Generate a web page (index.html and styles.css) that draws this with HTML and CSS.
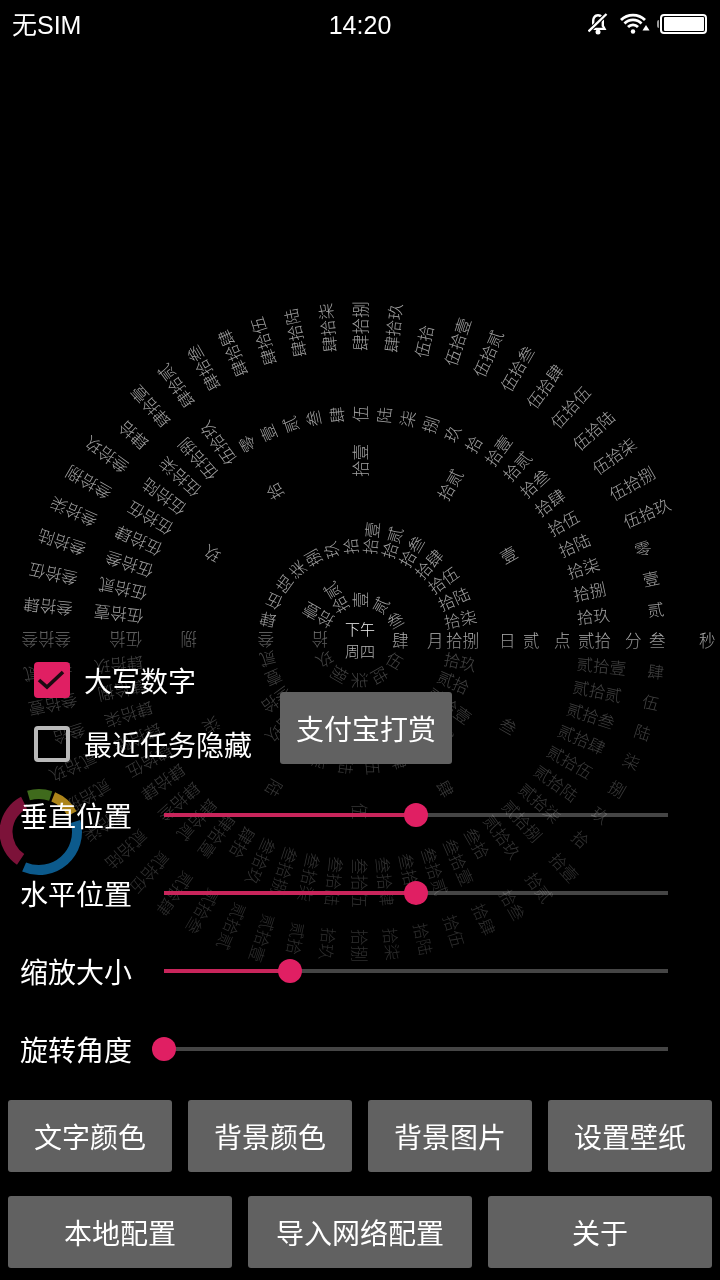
FILE: index.html
```html
<!DOCTYPE html>
<html lang="zh-CN">
<head>
<meta charset="utf-8">
<title>文字时钟</title>
<link rel="stylesheet" href="styles.css">
</head>
<body>
<div class="page">
  <div class="dial" id="dial"></div>
  <div class="dim"></div>
  <div class="center-text">
    <div class="center-top">下午</div>
    <div class="center-bottom">周四</div>
  </div>
  <svg class="logo" viewBox="0 0 90 100" fill="none" stroke-width="10">
    <path stroke="#7c1239" stroke-width="13" d="M20.6 79.4A33 33 0 0 1 24 22.6"/>
    <path stroke="#3f6a1c" d="M28.5 15.5A38 38 0 0 1 50.7 15.9"/>
    <path stroke="#ac841a" d="M53.2 16.8A38 38 0 0 1 72.2 33.6"/>
    <path stroke="#0c5a8c" d="M75.5 41.5A38 38 0 0 1 24.1 87"/>
  </svg>

  <header class="status">
    <span class="carrier">无SIM</span>
    <span class="clock">14:20</span>
    <div class="status-icons">
      <svg class="bell" viewBox="0 0 20 22" fill="none">
        <path fill="#fff" d="M10 1C6 1 4 4.5 4 8V12.5L1.5 17H18.5L16 12.5V8C16 4.5 14 1 10 1Z"/>
        <path fill="#000" d="M10 3.5C7.5 3.5 6.4 5.8 6.4 8V13.2L5.2 14.8H14.8L13.6 13.2V8C13.6 5.8 12.5 3.5 10 3.5Z"/>
        <circle cx="10" cy="19" r="2.5" fill="#fff"/>
        <path stroke="#000" stroke-width="4.4" d="M0.5 18.5L18.5 1"/>
        <path stroke="#fff" stroke-width="2.4" d="M0.5 18.5L18.5 1"/>
      </svg>
      <svg class="wifi" viewBox="0 0 32 21" fill="none" stroke="#fff" stroke-width="2.8">
        <path d="M2 7A17 17 0 0 1 26 7"/>
        <path d="M5.5 10.5A12 12 0 0 1 22.5 10.5"/>
        <path d="M9 14A7 7 0 0 1 19 14"/>
        <circle cx="14" cy="18.5" r="2.2" fill="#fff" stroke="none"/>
        <polygon points="27,12 30.5,17.5 23.5,17.5" fill="#fff" stroke="none"/>
      </svg>
      <div class="battery"><div class="battery-fill"></div></div>
    </div>
  </header>

  <main class="controls">
    <section class="top-row">
      <div class="options">
        <div class="option">
          <span class="box box-on">
            <svg viewBox="0 0 36 36" fill="none"><path stroke="#1c0a11" stroke-width="3.6" d="M5 18L13 25L29 10"/></svg>
          </span>
          <span class="option-label">大写数字</span>
        </div>
        <div class="option">
          <span class="box box-off"></span>
          <span class="option-label">最近任务隐藏</span>
        </div>
      </div>
      <button class="btn btn-pay">支付宝打赏</button>
    </section>

    <section class="sliders">
      <div class="slider-row">
        <span class="slider-label">垂直位置</span>
        <div class="track"><div class="fill" style="width:50%"><span class="thumb"></span></div></div>
      </div>
      <div class="slider-row">
        <span class="slider-label">水平位置</span>
        <div class="track"><div class="fill" style="width:50%"><span class="thumb"></span></div></div>
      </div>
      <div class="slider-row">
        <span class="slider-label">缩放大小</span>
        <div class="track"><div class="fill" style="width:25%"><span class="thumb"></span></div></div>
      </div>
      <div class="slider-row">
        <span class="slider-label">旋转角度</span>
        <div class="track"><div class="fill" style="width:0%"><span class="thumb"></span></div></div>
      </div>
    </section>

    <section class="btn-row btn-row-first">
      <button class="btn">文字颜色</button>
      <button class="btn">背景颜色</button>
      <button class="btn">背景图片</button>
      <button class="btn">设置壁纸</button>
    </section>
    <section class="btn-row btn-row-second">
      <button class="btn">本地配置</button>
      <button class="btn">导入网络配置</button>
      <button class="btn">关于</button>
    </section>
  </main>
</div>
<script src="script.js"></script>
</body>
</html>
```
FILE: styles.css
```css
* { box-sizing: border-box; }
html, body { margin: 0; padding: 0; background: #000; }
body {
  font-family: "Noto Sans CJK SC", "Liberation Sans", sans-serif;
  color: #fff;
}
.page {
  position: relative;
  width: 720px;
  height: 1280px;
  overflow: hidden;
  display: flex;
  flex-direction: column;
  background: #000;
}

/* dial */
.dial { position: absolute; inset: 0; will-change: transform; }
.dial-item {
  position: absolute;
  left: 360px;
  top: 631px;
  font-size: 16.5px;
  line-height: 18px;
  height: 18px;
  white-space: nowrap;
  color: #a2a2a2;
  font-weight: 300;
  transform-origin: 0 9px;
}
.dial-item.now { color: #fff; }
.center-text {
  position: absolute;
  left: 330px;
  top: 618px;
  width: 60px;
  text-align: center;
  font-size: 15px;
  line-height: 22px;
  font-weight: 300;
  will-change: transform;
}
.center-top { color: #f4f4f4; }
.center-bottom { color: #b4b4b4; }
.dim {
  position: absolute;
  left: 0;
  right: 0;
  top: 620px;
  height: 660px;
  background: linear-gradient(to bottom,
    rgba(0,0,0,0) 0,
    rgba(0,0,0,.42) 20px,
    rgba(0,0,0,.58) 40px,
    rgba(0,0,0,.72) 300px);
}
.logo {
  position: absolute;
  left: 0;
  top: 780px;
  width: 90px;
  height: 100px;
}

/* status bar */
.status {
  position: relative;
  height: 48px;
  flex: none;
  display: flex;
  align-items: center;
  justify-content: center;
  padding: 2px 12px 0;
  font-family: "Liberation Sans", "Noto Sans CJK SC", sans-serif;
  font-size: 25px;
}
.carrier { position: absolute; left: 12px; top: 10px; line-height: 30px; }
.clock { line-height: 30px; }
.status-icons {
  position: absolute;
  right: 13px;
  top: 13px;
  display: flex;
  align-items: flex-start;
}
.bell { width: 20px; height: 22px; }
.wifi { width: 32px; height: 21px; margin-left: 11px; }
.battery {
  position: relative;
  width: 47px;
  height: 20px;
  margin-left: 9px;
  margin-top: 1px;
  border: 2px solid #fff;
  border-radius: 4px;
  padding: 1px;
  display: flex;
  justify-content: flex-end;
}
.battery::before {
  content: "";
  position: absolute;
  left: -5px;
  top: 4px;
  width: 2px;
  height: 8px;
  background: #999;
  border-radius: 2px 0 0 2px;
}
.battery-fill { width: 40px; background: #fff; border-radius: 1px; }

/* controls */
.controls {
  position: relative;
  margin-top: auto;
  padding-bottom: 12px;
  display: flex;
  flex-direction: column;
}
.top-row { display: flex; padding-left: 34px; }
.options { display: flex; flex-direction: column; width: 246px; }
.option { height: 64px; display: flex; align-items: center; gap: 14px; }
.box { width: 36px; height: 36px; flex: none; border-radius: 4px; display: block; }
.box svg { display: block; width: 36px; height: 36px; }
.box-on { background: #e01f63; }
.box-off { border: 4px solid #b9b9b9; }
.option-label { font-size: 28px; line-height: 36px; white-space: nowrap; }

.btn {
  font-family: inherit;
  font-size: 28px;
  line-height: 36px;
  color: #fff;
  background: #616161;
  border: 0;
  border-radius: 3px;
  padding: 0;
  height: 72px;
  white-space: nowrap;
}
.btn-pay { width: 172px; align-self: flex-end; margin-bottom: 12px; }

.sliders { display: flex; flex-direction: column; }
.slider-row { height: 78px; display: flex; align-items: center; padding-left: 20px; }
.slider-label { width: 112px; font-size: 28px; line-height: 36px; white-space: nowrap; flex: none; }
.track {
  margin-left: 32px;
  width: 504px;
  height: 4px;
  background: rgba(255,255,255,.27);
}
.fill { position: relative; height: 4px; background: #c8255b; }
.thumb {
  position: absolute;
  right: -12px;
  top: -10px;
  width: 24px;
  height: 24px;
  border-radius: 50%;
  background: #e01f63;
}

.btn-row { display: flex; gap: 16px; padding: 0 8px; }
.btn-row .btn { flex: 1 1 0; }
.btn-row-first { margin-top: 12px; }
.btn-row-second { margin-top: 24px; }
```
FILE: script.js
```js
(function () {
  var dial = document.getElementById('dial');
  var D = ['零', '壹', '贰', '叁', '肆', '伍', '陆', '柒', '捌', '玖'];

  function cn(n) {
    if (n < 10) return D[n];
    var tens = Math.floor(n / 10), ones = n % 10;
    return (tens > 1 ? D[tens] : '') + '拾' + (ones ? D[ones] : '');
  }

  function add(text, angle, radius, now) {
    var el = document.createElement('span');
    el.className = 'dial-item' + (now ? ' now' : '');
    el.textContent = text;
    el.style.transform = 'rotate(' + angle + 'deg) translateX(' + radius + 'px)';
    dial.appendChild(el);
  }

  function ring(from, to, current, radius, step) {
    for (var n = from; n <= to; n++) {
      add(cn(n), (n - current) * step, radius, n === current);
    }
  }

  ring(1, 12, 4, 32, 30);    // month
  ring(1, 30, 18, 86, 12);   // day
  ring(1, 12, 2, 163, 30);   // hour
  ring(0, 59, 20, 218, 6);   // minute
  ring(0, 59, 3, 289, 6);    // second

  add('月', 0, 67, true);
  add('日', 0, 139, true);
  add('点', 0, 194, true);
  add('分', 0, 265, true);
  add('秒', 0, 339, true);
})();
```
